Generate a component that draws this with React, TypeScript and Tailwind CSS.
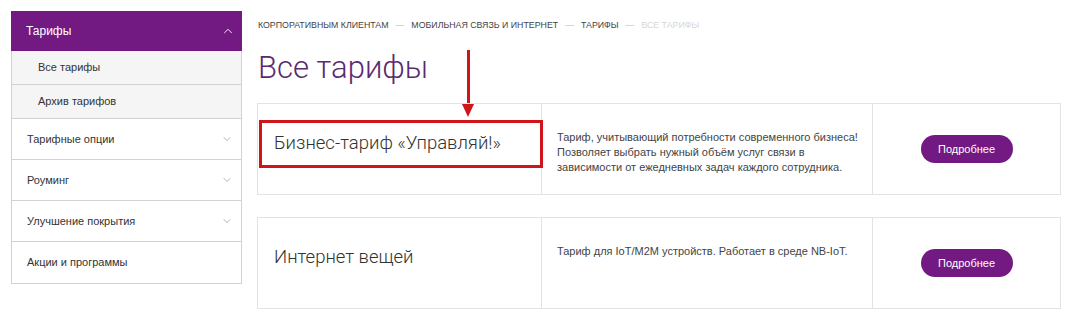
import { ChevronDown, ChevronUp } from "lucide-react";

const font = { fontFamily: '"Liberation Sans", Arial, sans-serif' };
const roboto = { fontFamily: 'Roboto, "Liberation Sans", sans-serif' };

const menu = [
  { label: "Тарифные опции", arrow: true },
  { label: "Роуминг", arrow: true },
  { label: "Улучшение покрытия", arrow: true },
  { label: "Акции и программы", arrow: false },
];

const tariffs = [
  {
    title: "Бизнес-тариф «Управляй!»",
    text: "Тариф, учитывающий потребности современного бизнеса! Позволяет выбрать нужный объём услуг связи в зависимости от ежедневных задач каждого сотрудника.",
    marked: true,
  },
  {
    title: "Интернет вещей",
    text: "Тариф для IoT/M2M устройств. Работает в среде NB-IoT.",
    marked: false,
  },
];

export default function App() {
  return (
    <div className="flex bg-white w-[1069px] h-[319px] pt-[11px] pl-[11px] text-[#333]" style={font}>
      {/* Sidebar */}
      <aside className="w-[231px] shrink-0 self-start border-x border-b border-[#d2d2d2]">
        <div className="h-[40px] bg-[#731982] text-white text-[12px] flex items-center justify-between pl-[15px] pr-[7px] -mx-px">
          <span>Тарифы</span>
          <ChevronUp className="w-[14px] h-[14px]" strokeWidth={1.5} />
        </div>
        <div className="h-[34px] bg-[#f5f5f5] border-b border-[#d2d2d2] flex items-center pl-[26px] text-[11px]">
          Все тарифы
        </div>
        <div className="h-[34px] bg-[#f5f5f5] border-b border-[#d2d2d2] flex items-center pl-[26px] text-[11px]">
          Архив тарифов
        </div>
        {menu.map((m, i) => (
          <div
            key={m.label}
            className={`h-[41px] flex items-center justify-between pl-[15px] pr-[8px] text-[11px] ${i < menu.length - 1 ? "border-b border-[#d2d2d2]" : ""}`}
          >
            <span>{m.label}</span>
            {m.arrow && <ChevronDown className="w-[12px] h-[12px] text-[#888]" strokeWidth={1.3} />}
          </div>
        ))}
      </aside>

      {/* Main */}
      <main className="relative ml-[15px] w-[804px] pt-[7px]">
        <nav className="flex items-center gap-[7px] text-[8.8px] uppercase leading-[14px] pl-px text-[#444]">
          <span>Корпоративным клиентам</span>
          <span className="text-[#bbb]">—</span>
          <span>Мобильная связь и интернет</span>
          <span className="text-[#bbb]">—</span>
          <span>Тарифы</span>
          <span className="text-[#bbb]">—</span>
          <span className="text-[#d6d6d6]">Все тарифы</span>
        </nav>
        <h1 className="mt-[16px] text-[31px] leading-[40px] font-light text-[#5b2a6f] pl-px" style={roboto}>
          Все тарифы
        </h1>

        {/* annotation arrow */}
        <div className="absolute left-[205px] top-[39px] flex flex-col items-center">
          <div className="w-[3px] h-[54px] bg-[#d0141c]" />
          <div className="w-0 h-0 border-x-[6px] border-x-transparent border-t-[13px] border-t-[#d0141c]" />
        </div>

        <div className="mt-[15px] flex flex-col gap-[22px]">
          {tariffs.map((t) => (
            <div key={t.title} className="relative h-[92px] border border-[#e3e3e3] flex">
              <div className="w-[284px] shrink-0 border-r border-[#e3e3e3] pt-[27px] pl-[16px] text-[18.5px] leading-[24px] font-light text-[#333]" style={roboto}>
                {t.title}
              </div>
              {t.marked && (
                <div className="absolute left-[1px] top-[16px] w-[284px] h-[48px] border-[3px] border-[#d0141c]" />
              )}
              <div className="w-[331px] shrink-0 border-r border-[#e3e3e3] pt-[26px] pl-[15px] pr-[14px] text-[11px] leading-[15px] text-[#444]">
                {t.text}
              </div>
              <div className="flex-1 flex items-center justify-center">
                <button className="w-[92px] h-[28px] rounded-full bg-[#731982] text-white text-[11px]">
                  Подробнее
                </button>
              </div>
            </div>
          ))}
        </div>
      </main>
    </div>
  );
}
